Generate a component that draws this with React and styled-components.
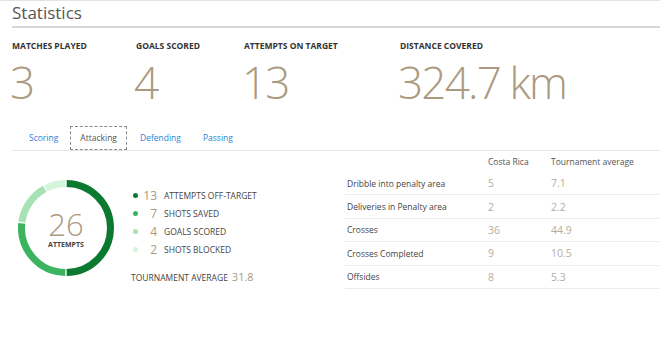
import React from 'react';
import styled, { createGlobalStyle } from 'styled-components';

const GlobalStyle = createGlobalStyle`
  body {
    margin: 0;
    background: #fff;
    font-family: "Open Sans", "Liberation Sans", sans-serif;
  }
`;

const tan = '#ab9a80';
const textDark = '#444';
const blue = '#2a85d6';

const Page = styled.div`
  width: 660px;
  height: 342px;
  box-sizing: border-box;
  border-top: 1px solid #e4e4e4;
  padding-left: 12px;
  overflow: hidden;
`;

const Title = styled.h1`
  margin: 0;
  font-size: 17px;
  font-weight: 400;
  color: #555;
  line-height: 24px;
  height: 25px;
  border-bottom: 2px solid #d6d6d6;
`;

const StatRow = styled.div`
  display: flex;
  margin-top: 12px;
`;

const Stat = styled.div`
  width: ${p => p.w}px;
`;

const StatLabel = styled.div`
  font-size: 8.5px;
  font-weight: 700;
  color: #333;
  line-height: 12px;
`;

const StatValue = styled.div`
  font-size: 44px;
  font-weight: 300;
  letter-spacing: -1.8px;
  color: ${tan};
  line-height: 54px;
  margin-top: 3px;
  margin-left: -2px;
`;

const Tabs = styled.div`
  display: flex;
  gap: 2px;
  margin-top: 17px;
  padding-left: 7px;
  height: 24px;
  border-bottom: 1px solid #e6e6e6;
`;

const Tab = styled.div`
  padding: 0 9px;
  font-size: 8.5px;
  line-height: 22px;
  color: ${p => (p.active ? '#555' : blue)};
  border: 1px dashed ${p => (p.active ? '#888' : 'transparent')};
  margin-right: ${p => (p.active ? 1 : 0)}px;
`;

const Content = styled.div`
  display: flex;
`;

const LeftPane = styled.div`
  width: 331px;
  display: flex;
  align-items: flex-start;
  padding-top: 29px;
`;

const Donut = styled.div`
  position: relative;
  width: 96px;
  height: 96px;
  margin-left: 6px;
`;

const DonutCenter = styled.div`
  position: absolute;
  inset: 0;
  display: flex;
  flex-direction: column;
  align-items: center;
  justify-content: center;
  padding-top: 3px;
`;

const DonutNumber = styled.div`
  font-size: 31px;
  font-weight: 300;
  color: ${tan};
  line-height: 31px;
`;

const DonutLabel = styled.div`
  font-size: 7px;
  font-weight: 700;
  color: #444;
  line-height: 10px;
`;

const Legend = styled.div`
  margin-left: 17px;
  margin-top: 6px;
`;

const LegendRow = styled.div`
  display: flex;
  align-items: center;
  height: 18px;
`;

const Dot = styled.span`
  width: 5px;
  height: 5px;
  border-radius: 50%;
  background: ${p => p.color};
  margin-left: 2px;
`;

const LegendNum = styled.span`
  width: 19px;
  text-align: right;
  font-size: 12px;
  color: ${tan};
`;

const LegendText = styled.span`
  margin-left: 7px;
  font-size: 8.5px;
  color: ${textDark};
  text-transform: uppercase;
`;

const Average = styled.div`
  margin-top: 11px;
  font-size: 8.5px;
  color: ${textDark};
  display: flex;
  align-items: baseline;
  gap: 4px;
`;

const AverageValue = styled.span`
  font-size: 11px;
  color: ${tan};
`;

const Table = styled.div`
  flex: 1;
  margin-left: 2px;
`;

const Row = styled.div`
  display: grid;
  grid-template-columns: 141px 63px 1fr;
  align-items: center;
  height: ${p => (p.head ? 21 : 22.4)}px;
  border-bottom: ${p => (p.head ? 'none' : '1px solid #ececec')};
  padding-left: 2px;
  font-size: 8.5px;
  color: ${textDark};
`;

const Num = styled.span`
  font-size: 10.5px;
  color: #b8ad9c;
`;

const Head = styled.span`
  font-size: 8.5px;
  color: #555;
`;

const segments = [
  { value: 13, color: '#0b7a30', label: 'Attempts off-target' },
  { value: 7, color: '#3cb45f', label: 'Shots saved' },
  { value: 4, color: '#a6e2b3', label: 'Goals scored' },
  { value: 2, color: '#d5f6dd', label: 'Shots blocked' },
];

const rows = [
  ['Dribble into penalty area', '5', '7.1'],
  ['Deliveries in Penalty area', '2', '2.2'],
  ['Crosses', '36', '44.9'],
  ['Crosses Completed', '9', '10.5'],
  ['Offsides', '8', '5.3'],
];

function arc(cx, cy, r, a0, a1) {
  const p = a => [cx + r * Math.sin(a), cy - r * Math.cos(a)];
  const [x0, y0] = p(a0);
  const [x1, y1] = p(a1);
  const large = a1 - a0 > Math.PI ? 1 : 0;
  return `M ${x0} ${y0} A ${r} ${r} 0 ${large} 1 ${x1} ${y1}`;
}

function DonutChart() {
  const total = segments.reduce((s, x) => s + x.value, 0);
  const gap = 0.03;
  let start = 0;
  return (
    <svg width="96" height="96" viewBox="0 0 96 96">
      {segments.map(s => {
        const sweep = (s.value / total) * Math.PI * 2;
        const d = arc(48, 48, 44.5, start + gap / 2, start + sweep - gap / 2);
        start += sweep;
        return <path key={s.label} d={d} fill="none" stroke={s.color} strokeWidth="7" />;
      })}
    </svg>
  );
}

export default function App() {
  return (
    <>
      <GlobalStyle />
      <Page>
        <Title>Statistics</Title>
        <StatRow>
          <Stat w={124}>
            <StatLabel>MATCHES PLAYED</StatLabel>
            <StatValue>3</StatValue>
          </Stat>
          <Stat w={108}>
            <StatLabel>GOALS SCORED</StatLabel>
            <StatValue>4</StatValue>
          </Stat>
          <Stat w={156}>
            <StatLabel>ATTEMPTS ON TARGET</StatLabel>
            <StatValue>13</StatValue>
          </Stat>
          <Stat w={200}>
            <StatLabel>DISTANCE COVERED</StatLabel>
            <StatValue>324.7 km</StatValue>
          </Stat>
        </StatRow>
        <Tabs>
          <Tab>Scoring</Tab>
          <Tab active>Attacking</Tab>
          <Tab>Defending</Tab>
          <Tab>Passing</Tab>
        </Tabs>
        <Content>
          <LeftPane>
            <Donut>
              <DonutChart />
              <DonutCenter>
                <DonutNumber>26</DonutNumber>
                <DonutLabel>ATTEMPTS</DonutLabel>
              </DonutCenter>
            </Donut>
            <Legend>
              {segments.map(s => (
                <LegendRow key={s.label}>
                  <Dot color={s.color} />
                  <LegendNum>{s.value}</LegendNum>
                  <LegendText>{s.label}</LegendText>
                </LegendRow>
              ))}
              <Average>
                TOURNAMENT AVERAGE <AverageValue>31.8</AverageValue>
              </Average>
            </Legend>
          </LeftPane>
          <Table>
            <Row head>
              <span />
              <Head>Costa Rica</Head>
              <Head>Tournament average</Head>
            </Row>
            {rows.map(r => (
              <Row key={r[0]}>
                <span>{r[0]}</span>
                <Num>{r[1]}</Num>
                <Num>{r[2]}</Num>
              </Row>
            ))}
          </Table>
        </Content>
      </Page>
    </>
  );
}
